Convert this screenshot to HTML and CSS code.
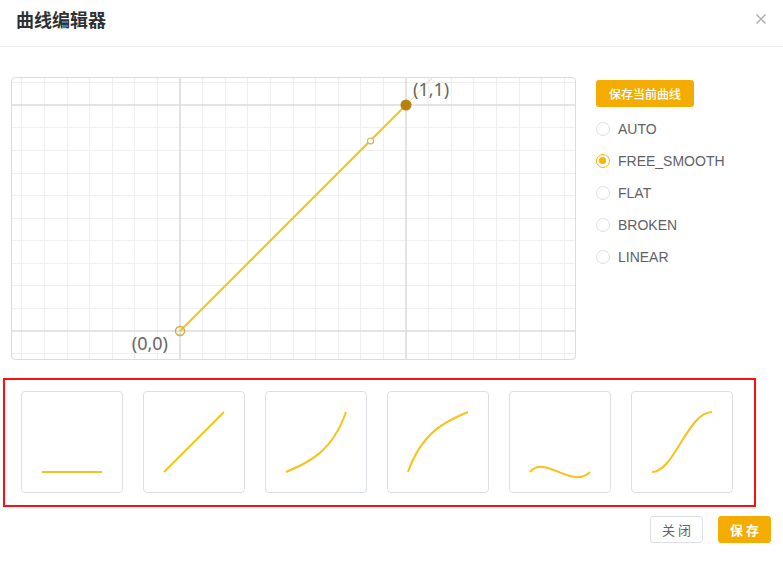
FILE: index.html
```html
<!DOCTYPE html>
<html lang="zh">
<head>
<meta charset="utf-8">
<title>曲线编辑器</title>
<link rel="stylesheet" href="styles.css">
</head>
<body>
<div class="dialog">
  <div class="header">
    <div class="title">曲线编辑器</div>
    <svg class="close" width="12" height="12" viewBox="0 0 12 12"><path d="M1.5 1.5 L10.5 10.5 M10.5 1.5 L1.5 10.5" stroke="#a8abb0" stroke-width="1.3" fill="none"/></svg>
  </div>
  <div class="main">
    <div class="chart">
      <svg width="563" height="281" viewBox="12 78 563 281">
        <g stroke="#efefef" stroke-width="1">
          <path d="M21.5 78V359 M44.5 78V359 M67.5 78V359 M89.5 78V359 M112.5 78V359 M134.5 78V359 M157.5 78V359 M202.5 78V359 M225.5 78V359 M247.5 78V359 M270.5 78V359 M293.5 78V359 M315.5 78V359 M338.5 78V359 M360.5 78V359 M383.5 78V359 M428.5 78V359 M451.5 78V359 M473.5 78V359 M496.5 78V359 M519.5 78V359 M541.5 78V359 M564.5 78V359"/>
          <path d="M12 82.5H575 M12 127.5H575 M12 150.5H575 M12 173.5H575 M12 195.5H575 M12 218.5H575 M12 240.5H575 M12 263.5H575 M12 285.5H575 M12 308.5H575 M12 353.5H575"/>
        </g>
        <g stroke="#dcdcdc" stroke-width="1.6">
          <path d="M180 78V359 M406 78V359 M12 105H575 M12 331H575"/>
        </g>
        <line x1="406" y1="105" x2="440" y2="70" stroke="#f8d57a" stroke-width="1"/>
        <line x1="180" y1="331" x2="406" y2="105" stroke="#f7c21b" stroke-width="2"/>
        <circle cx="180" cy="331" r="4.5" fill="none" stroke="#d9a73a" stroke-width="1.4"/>
        <circle cx="370.5" cy="141" r="3" fill="#fff" stroke="#d6b155" stroke-width="1.2"/>
        <circle cx="406" cy="105" r="5.5" fill="#b5820f"/>
        <text class="coord" x="413" y="96">(1,1)</text>
        <text class="coord" x="168" y="350" text-anchor="end">(0,0)</text>
      </svg>
    </div>
    <div class="side">
      <button class="btn-save-curve">保存当前曲线</button>
      <div class="radios">
        <div class="radio"><span class="dot"></span><span class="label">AUTO</span></div>
        <div class="radio checked"><span class="dot"></span><span class="label">FREE_SMOOTH</span></div>
        <div class="radio"><span class="dot"></span><span class="label">FLAT</span></div>
        <div class="radio"><span class="dot"></span><span class="label">BROKEN</span></div>
        <div class="radio"><span class="dot"></span><span class="label">LINEAR</span></div>
      </div>
    </div>
  </div>
  <div class="presets">
    <div class="card"><svg viewBox="0 0 100 100" width="100" height="100"><path d="M20 80 H80"/></svg></div>
    <div class="card"><svg viewBox="0 0 100 100" width="100" height="100"><path d="M20 80 L80 20"/></svg></div>
    <div class="card"><svg viewBox="0 0 100 100" width="100" height="100"><path d="M20 80 C42 71, 66 60, 80 20"/></svg></div>
    <div class="card"><svg viewBox="0 0 100 100" width="100" height="100"><path d="M20 80 C34 40, 58 29, 80 20"/></svg></div>
    <div class="card"><svg viewBox="0 0 100 100" width="100" height="100"><path d="M20 80 C35 62, 62 98, 80 80"/></svg></div>
    <div class="card"><svg viewBox="0 0 100 100" width="100" height="100"><path d="M20 80 C42 80, 56 20, 80 20"/></svg></div>
  </div>
  <div class="footer">
    <button class="btn btn-plain">关闭</button>
    <button class="btn btn-primary">保存</button>
  </div>
</div>
</body>
</html>
```

FILE: styles.css
```css
html, body {
  margin: 0;
  padding: 0;
  background: #fff;
}
body {
  font-family: "Liberation Sans", "Noto Sans CJK SC", sans-serif;
  width: 783px;
  height: 564px;
  overflow: hidden;
}
.header {
  display: flex;
  justify-content: space-between;
  align-items: flex-start;
  padding: 7px 16px 0 16px;
  box-sizing: border-box;
  height: 47px;
  border-bottom: 1px solid #e8eaec;
}
.title {
  font-size: 18px;
  font-weight: bold;
  color: #303133;
  line-height: 24px;
  font-family: "Noto Sans CJK SC", sans-serif;
}
.close {
  margin-top: 6px;
}
.main {
  display: flex;
  gap: 20px;
  padding: 30px 0 0 11px;
}
.chart {
  width: 565px;
  height: 283px;
  border: 1px solid #dcdcdc;
  border-radius: 4px;
  box-sizing: border-box;
  overflow: hidden;
}
.chart svg {
  display: block;
  overflow: visible;
}
.coord {
  font-family: "Noto Sans", sans-serif;
  font-size: 18px;
  fill: #666;
}
.side {
  padding-top: 3px;
}
.btn-save-curve {
  display: block;
  width: 98px;
  height: 27px;
  border: none;
  border-radius: 3px;
  background: #f5ac00;
  color: #fff;
  font-size: 12px;
  font-family: "Noto Sans CJK SC", sans-serif;
  font-weight: 500;
  padding: 0;
}
.radios {
  margin-top: 6px;
}
.radio {
  height: 32px;
  display: flex;
  align-items: center;
  gap: 8px;
}
.dot {
  width: 14px;
  height: 14px;
  box-sizing: border-box;
  border: 1px solid #dcdfe6;
  border-radius: 50%;
  background: #fff;
  position: relative;
}
.radio.checked .dot {
  border: 1.5px solid #f7b500;
}
.radio.checked .dot::after {
  content: "";
  position: absolute;
  left: 2px;
  top: 2px;
  width: 7px;
  height: 7px;
  border-radius: 50%;
  background: #f7b500;
}
.label {
  font-size: 14px;
  color: #606266;
}
.presets {
  margin: 18px 0 0 3px;
  width: 753px;
  height: 129px;
  box-sizing: border-box;
  border: 2px solid #ff1010;
  padding: 11px 0 0 16px;
  display: flex;
  gap: 20px;
}
.card {
  width: 102px;
  height: 102px;
  box-sizing: border-box;
  border: 1px solid #dcdfe6;
  border-radius: 4px;
}
.card svg {
  display: block;
}
.card path {
  fill: none;
  stroke: #f7c21b;
  stroke-width: 2;
}
.footer {
  display: flex;
  justify-content: flex-end;
  gap: 15px;
  margin-top: 9px;
  padding-right: 12px;
}
.btn {
  width: 53px;
  height: 27px;
  border-radius: 3px;
  font-size: 13px;
  letter-spacing: 3px;
  padding: 0 0 0 3px;
  font-family: "Noto Sans CJK SC", sans-serif;
}
.btn-plain {
  background: #fff;
  border: 1px solid #dcdfe6;
  color: #606266;
}
.btn-primary {
  background: #f5ac00;
  border: 1px solid #f5ac00;
  color: #fff;
  font-weight: bold;
}
```
